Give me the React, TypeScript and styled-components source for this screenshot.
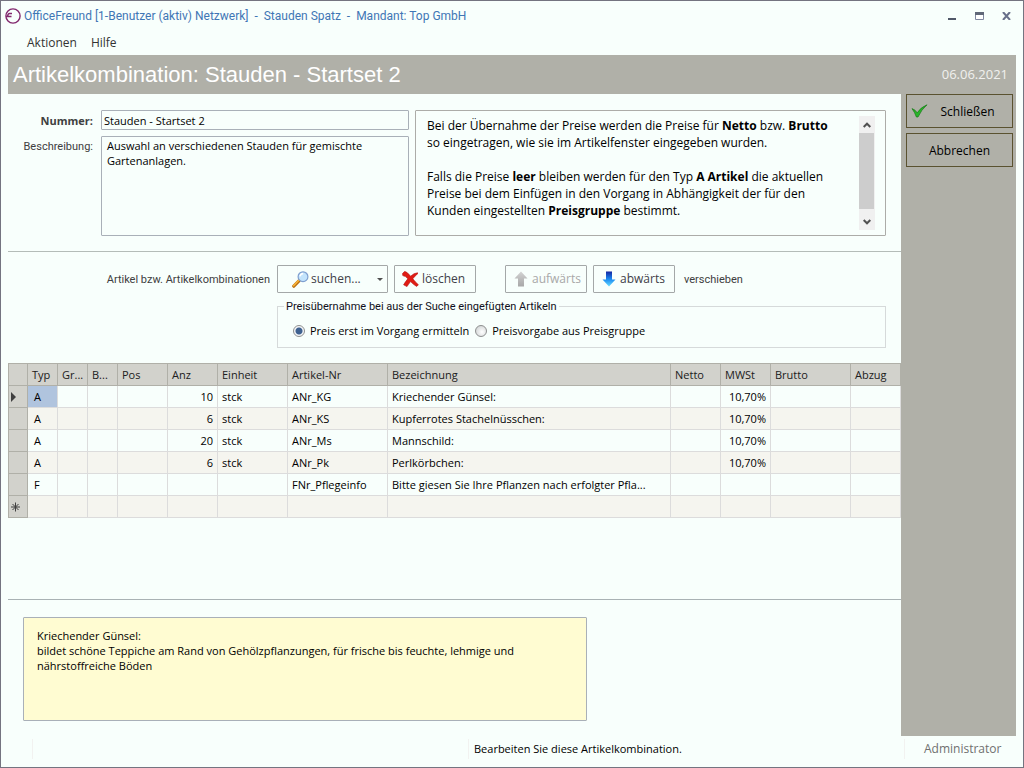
import React from "react";
import styled, { createGlobalStyle, css } from "styled-components";

const paper = "#f8fffc";
const stone = "#b0b0a8";
const line = "#a9b0b8";
const narrow = `Roboto, "Liberation Sans", sans-serif`;

const GlobalStyle = createGlobalStyle`
  * { box-sizing: border-box; }
  body {
    margin: 0;
    background: ${paper};
    color: #000;
    font: 11px/15px "Open Sans", "Noto Sans", sans-serif;
  }
  button, input, textarea { font: inherit; color: inherit; margin: 0; }
  svg { display: block; flex: none; }
`;

const Window = styled.div`
  display: flex;
  flex-direction: column;
  min-height: 100vh;
  padding: 0 7px;
  border: 1px solid #747480;
  background: ${paper};
`;

const TitleBar = styled.header`
  display: flex;
  align-items: center;
  height: 30px;
  margin: 0 -2px 0 -3px;
`;

const WindowTitle = styled.span`
  flex: 1;
  margin-left: 3px;
  color: #3f76b5;
  font: 12px/16px ${narrow};
  white-space: pre;
`;

const WindowButtons = styled.div`
  display: flex;
  gap: 3px;
`;

const WindowButton = styled.button`
  display: grid;
  place-items: center;
  width: 24px;
  height: 20px;
  padding: 0;
  border: 0;
  background: none;
`;

const MenuBar = styled.nav`
  display: flex;
  gap: 14px;
  height: 24px;
  padding-left: 19px;
`;

const MenuButton = styled.button`
  padding: 0 0 2px;
  border: 0;
  background: none;
  color: #333;
  font-size: 12px;
`;

const Banner = styled.div`
  display: flex;
  align-items: center;
  justify-content: space-between;
  height: 39px;
  padding: 0 8px 0 5px;
  background: ${stone};
  color: #fff;
`;

const PageTitle = styled.h1`
  margin: 0;
  font: 22px/26px "Liberation Sans", sans-serif;
`;

const BannerDate = styled.span`
  color: #f0f0ee;
  font-size: 13px;
`;

const Body = styled.div`
  display: flex;
  flex: 1;
`;

const Main = styled.main`
  display: flex;
  flex: 1;
  flex-direction: column;
  min-width: 0;
`;

const Sidebar = styled.aside`
  display: flex;
  flex-direction: column;
  gap: 5px;
  width: 115px;
  padding: 0 3px 0 5px;
  background: ${stone};
`;

const SideButton = styled.button`
  display: grid;
  grid-template-columns: 16px 1fr 16px;
  align-items: center;
  height: 34px;
  padding: 0 4px;
  border: 1px solid #5a5230;
  background: ${stone};
  font-size: 12px;

  span { grid-column: 2; }
  svg + span { grid-column: 2 / 4; }
`;

const MasterData = styled.section`
  display: grid;
  grid-template-columns: 87px minmax(0, 308fr) minmax(0, 471fr);
  grid-template-rows: 20px 100px;
  gap: 6px;
  padding: 16px 15px 15px 0;
  border-bottom: 1px solid #b4bcb8;
`;

const FieldLabel = styled.label<{ $strong?: boolean }>`
  padding: 3px 2px 0 0;
  color: #404040;
  text-align: right;
  ${(p) => (p.$strong ? "font-weight: 700;" : `font-family: ${narrow};`)}
`;

const box = css`
  border: 1px solid ${line};
  border-radius: 1px;
  background: ${paper};
`;

const TextInput = styled.input`
  ${box}
  width: 100%;
  height: 20px;
  padding: 0 2px;
`;

const TextBlock = styled.textarea`
  ${box}
  display: block;
  width: 100%;
  height: 100%;
  padding: 1px 5px;
  resize: none;
  outline: 0;
`;

const InfoBox = styled.div`
  ${box}
  display: flex;
  grid-area: 1 / 3 / 3 / 4;
  gap: 20px;
  padding: 5px 10px 5px 11px;
  border-color: #acaca8;
`;

const InfoText = styled.div`
  flex: 1;
  min-width: 0;
  font-size: 12px;
  line-height: 17px;

  p { margin: 1px 0 17px; }
`;

const ScrollTrack = styled.div`
  display: flex;
  flex-direction: column;
  width: 16px;
  background: #f0f0f0;
`;

const ScrollButton = styled.button`
  display: grid;
  place-items: center;
  height: 17px;
  padding: 0;
  border: 0;
  background: none;
`;

const ScrollThumb = styled.div`
  flex: 1;
  margin: 0 1px 4px 0;
  background: #cdcdcd;
`;

const ItemTools = styled.section`
  padding: 13px 15px 15px 0;
`;

const Toolbar = styled.div`
  display: flex;
  align-items: center;
  color: #404040;
  font-family: ${narrow};
`;

const ToolbarCaption = styled.span`
  width: 269px;
  padding-right: 7px;
  text-align: right;
`;

const ButtonPair = styled.div`
  display: flex;
  gap: 6px;
  margin-right: 9px;

  & + & { margin-left: 20px; }
`;

const ToolButton = styled.button<{ $wide?: boolean }>`
  display: flex;
  align-items: center;
  gap: ${(p) => (p.$wide ? 2 : 3)}px;
  width: ${(p) => (p.$wide ? 111 : 82)}px;
  height: 28px;
  padding: 0 ${(p) => (p.$wide ? "4px 0 14px" : "0 0 7px")};
  border: 1px solid #a4a8a8;
  border-radius: 1px;
  background: ${paper};
  color: #404048;
  font: 12px/16px "Open Sans", "Noto Sans", sans-serif;

  &:disabled { color: #a8a8a8; }
  svg + svg { margin-left: auto; }
`;

const PriceGroup = styled.fieldset`
  display: flex;
  align-items: center;
  gap: 6px;
  height: 49px;
  margin: 6px 0 0 269px;
  padding: 0 15px;
  border: 1px solid #d6dada;
`;

const GroupLegend = styled.legend`
  margin-left: -9px;
  padding: 0 2px;
  color: #101020;
  font-family: ${narrow};
`;

const RadioLabel = styled.label`
  display: flex;
  align-items: center;
  gap: 5px;
`;

const Radio = styled.input`
  appearance: none;
  width: 12px;
  height: 12px;
  border: 1px solid #8e8f8f;
  border-radius: 50%;
  background: radial-gradient(circle at 60% 60%, #fff, #c8cccc);

  &:checked {
    background: radial-gradient(circle, #3f618f 0 3px, #f4f6f8 4px);
  }
`;

const Grid = styled.table`
  width: 100%;
  table-layout: fixed;
  border-collapse: separate;
  border-spacing: 0;
`;

const cell = css`
  height: 22px;
  padding: 0 4px;
  overflow: hidden;
  text-overflow: ellipsis;
  white-space: nowrap;
`;

const HeadCell = styled.th`
  ${cell}
  height: 23px;
  padding-right: 1px;
  border: solid ${stone};
  border-width: 1px 1px 1px 0;
  background: #d2d2cc;
  color: #202020;
  font-weight: 400;
  text-align: left;

  &:first-child { border-left-width: 1px; }
`;

const RowHead = styled.th`
  ${cell}
  padding: 0 2px;
  border: solid ${stone};
  border-width: 0 1px 1px;
  background: #d2d2cc;
`;

const Cell = styled.td<{ $right?: boolean; $selected?: boolean }>`
  ${cell}
  border: solid #dcdcdc;
  border-width: 0 1px 1px 0;
  text-align: ${(p) => (p.$right ? "right" : "left")};
  background: ${(p) => (p.$selected ? "#b0c4de" : "transparent")};

  &:nth-child(2) { padding-left: 6px; }
`;

const Row = styled.tr`
  &:nth-child(even) { background: #f5f5ef; }
`;

const NoteSection = styled.section`
  margin-top: auto;
  padding: 17px 15px 15px;
  border-top: 1px solid #a9b2b4;
`;

const Note = styled.div`
  max-width: 564px;
  min-height: 104px;
  padding: 10px 13px;
  border: 1px solid ${line};
  border-radius: 1px;
  background: #fffcd2;
`;

const StatusBar = styled.footer`
  display: grid;
  grid-template-columns: 24px 436fr 436fr 112px;
  height: 31px;
  padding-top: 3px;
`;

const StatusCell = styled.span<{ $muted?: boolean }>`
  height: 20px;
  padding-left: ${(p) => (p.$muted ? 19 : 5)}px;
  border-left: 1px solid #f2f2f0;
  color: ${(p) => (p.$muted ? "#707070" : "#000")};
  font-size: ${(p) => (p.$muted ? 12 : 11)}px;
  line-height: 20px;
`;

const Logo = () => (
  <svg width="16" height="16" viewBox="0 0 16 16" fill="none" stroke="#82286e" strokeWidth="1.4">
    <circle cx="8" cy="8" r="7.1" />
    <path d="M1 8.500h5.500M7 5.500H4.500Q2.800 5.500 2.600 8.500" />
  </svg>
);

const Magnifier = () => (
  <svg width="17" height="17" viewBox="0 0 17 17">
    <path d="M1.8 15.2 7.2 9.6" stroke="#b86f12" strokeWidth="3.2" strokeLinecap="round" />
    <path d="M1.6 14.6 6.8 9.2" stroke="#f8b338" strokeWidth="1.6" strokeLinecap="round" />
    <circle cx="11" cy="5.7" r="4.9" fill="#c3e4fc" stroke="#7f9fd0" strokeWidth="1.2" />
    <path d="M8 5.4Q8.5 2.8 11.2 2.6" fill="none" stroke="#fff" strokeWidth="1.5" />
  </svg>
);

const DeleteMark = () => (
  <svg width="17" height="16" viewBox="0 0 17 16">
    <path d="M.5 2.600 2.600.4Q5 .6 8.600 5.200 12 2 15.400 1.800L16 2.400Q12.800 5 10.800 7.800q2.400 3.200 5.600 6L14.600 15.400Q11.400 13.600 8.600 10.600 6.400 13.200 5 15.600L1.600 13.800Q3.600 10.400 5.800 7.800 4 5.200.8 4.600z" fill="#e01c14" stroke="#b40c0c" strokeWidth=".6" />
  </svg>
);

const Arrow = ({ up }: { up?: boolean }) => (
  <svg width="16" height="16" viewBox="0 0 16 16">
    <defs>
      <linearGradient id={up ? "upFill" : "downFill"} x1="0" y1="0" x2="0" y2="1">
        <stop offset="0" stopColor={up ? "#d4d4d4" : "#1424a0"} />
        <stop offset=".5" stopColor={up ? "#bcbcbc" : "#1888f0"} />
        <stop offset="1" stopColor={up ? "#a8a8a8" : "#68dcff"} />
      </linearGradient>
    </defs>
    <path
      d={up ? "M8 .5 14.500 7.500H11v8H5v-8H1.500z" : "M8 15.500 14.500 8.500H11v-8H5v8H1.500z"}
      fill={up ? "url(#upFill)" : "url(#downFill)"}
    />
  </svg>
);

const CheckMark = () => (
  <svg width="17" height="14" viewBox="0 0 17 14">
    <path d="M1 4.600 4 6.200 6.200 8.800Q9.500 3.400 16 .8 10.500 5.400 7 13L5.400 13Q3.800 8.400 1 4.600z" fill="#28b428" stroke="#147814" strokeWidth=".7" />
  </svg>
);

const Chevron = ({ down }: { down?: boolean }) => (
  <svg width="8" height="6" viewBox="0 0 8 6" fill="none" stroke="#505050" strokeWidth="2">
    <path d={down ? "M.7 1 4 4.300 7.300 1" : "M.7 5 4 1.700 7.300 5"} />
  </svg>
);

const columns: [string, number][] = [
  ["", 20], ["Typ", 30], ["Gr...", 30], ["B...", 30], ["Pos", 50], ["Anz", 50],
  ["Einheit", 70], ["Artikel-Nr", 100], ["Bezeichnung", 0], ["Netto", 50],
  ["MWSt", 50], ["Brutto", 80], ["Abzug", 50],
];

const items = [
  ["A", "", "", "", "10", "stck", "ANr_KG", "Kriechender Günsel:", "", "10,70%", "", ""],
  ["A", "", "", "", "6", "stck", "ANr_KS", "Kupferrotes Stachelnüsschen:", "", "10,70%", "", ""],
  ["A", "", "", "", "20", "stck", "ANr_Ms", "Mannschild:", "", "10,70%", "", ""],
  ["A", "", "", "", "6", "stck", "ANr_Pk", "Perlkörbchen:", "", "10,70%", "", ""],
  ["F", "", "", "", "", "", "FNr_Pflegeinfo", "Bitte giesen Sie Ihre Pflanzen nach erfolgter Pfla...", "", "", "", ""],
  ["", "", "", "", "", "", "", "", "", "", "", ""],
];

export default function App() {
  return (
    <>
      <GlobalStyle />
      <Window>
        <TitleBar>
          <Logo />
          <WindowTitle>{"OfficeFreund [1-Benutzer (aktiv) Netzwerk]  -  Stauden Spatz  -  Mandant: Top GmbH"}</WindowTitle>
          <WindowButtons>
            <WindowButton aria-label="Minimieren">
              <svg width="8" height="8"><path d="M0 6h8v2H0z" fill="#505868" /></svg>
            </WindowButton>
            <WindowButton aria-label="Maximieren">
              <svg width="9" height="8"><path d="M.5.500h8v7h-8z" fill="#fff" stroke="#8088a0" /><path d="M0 0h9v3H0z" fill="#606878" /></svg>
            </WindowButton>
            <WindowButton aria-label="Fenster schließen">
              <svg width="9" height="8"><path d="M1 0 8 8M8 0 1 8" stroke="#68708a" strokeWidth="2" /></svg>
            </WindowButton>
          </WindowButtons>
        </TitleBar>
        <MenuBar>
          <MenuButton>Aktionen</MenuButton>
          <MenuButton>Hilfe</MenuButton>
        </MenuBar>
        <Banner>
          <PageTitle>Artikelkombination: Stauden - Startset 2</PageTitle>
          <BannerDate>06.06.2021</BannerDate>
        </Banner>
        <Body>
          <Main>
            <MasterData>
              <FieldLabel htmlFor="nummer" $strong>Nummer:</FieldLabel>
              <TextInput id="nummer" defaultValue="Stauden - Startset 2" />
              <FieldLabel htmlFor="beschreibung">Beschreibung:</FieldLabel>
              <TextBlock id="beschreibung" spellCheck={false} defaultValue={"Auswahl an verschiedenen Stauden für gemischte\nGartenanlagen."} />
              <InfoBox>
                <InfoText>
                  <p>
                    Bei der Übernahme der Preise werden die Preise für <b>Netto</b> bzw. <b>Brutto</b> so
                    eingetragen, wie sie im Artikelfenster eingegeben wurden.
                  </p>
                  <p>
                    Falls die Preise <b>leer</b> bleiben werden für den Typ <b>A Artikel</b> die aktuellen
                    Preise bei dem Einfügen in den Vorgang in Abhängigkeit der für den Kunden
                    eingestellten <b>Preisgruppe</b> bestimmt.
                  </p>
                </InfoText>
                <ScrollTrack>
                  <ScrollButton aria-label="Nach oben"><Chevron /></ScrollButton>
                  <ScrollThumb />
                  <ScrollButton aria-label="Nach unten"><Chevron down /></ScrollButton>
                </ScrollTrack>
              </InfoBox>
            </MasterData>
            <ItemTools>
              <Toolbar>
                <ToolbarCaption>Artikel bzw. Artikelkombinationen</ToolbarCaption>
                <ButtonPair>
                  <ToolButton $wide>
                    <Magnifier />
                    suchen...
                    <svg width="6" height="3"><path d="M0 0h6L3 3z" fill="#505050" /></svg>
                  </ToolButton>
                  <ToolButton><DeleteMark />löschen</ToolButton>
                </ButtonPair>
                <ButtonPair>
                  <ToolButton disabled><Arrow up />aufwärts</ToolButton>
                  <ToolButton><Arrow />abwärts</ToolButton>
                </ButtonPair>
                <span>verschieben</span>
              </Toolbar>
              <PriceGroup>
                <GroupLegend>Preisübernahme bei aus der Suche eingefügten Artikeln</GroupLegend>
                <RadioLabel>
                  <Radio type="radio" name="preis" defaultChecked />
                  Preis erst im Vorgang ermitteln
                </RadioLabel>
                <RadioLabel>
                  <Radio type="radio" name="preis" />
                  Preisvorgabe aus Preisgruppe
                </RadioLabel>
              </PriceGroup>
            </ItemTools>
            <Grid>
              <colgroup>
                {columns.map(([name, width]) => <col key={name} width={width || undefined} />)}
              </colgroup>
              <thead>
                <tr>{columns.map(([name]) => <HeadCell key={name}>{name}</HeadCell>)}</tr>
              </thead>
              <tbody>
                {items.map((item, r) => (
                  <Row key={r}>
                    <RowHead>
                      {r === 0 && <svg width="6" height="10"><path d="M0 0 5 5 0 10z" fill="#404040" /></svg>}
                      {r === 5 && (
                        <svg width="10" height="10" stroke="#404040">
                          <path d="M4.500.500v9M0 5h9M1.500 2l6 6M7.500 2l-6 6" />
                        </svg>
                      )}
                    </RowHead>
                    {item.map((text, c) => (
                      <Cell key={c} $right={c === 4 || c === 9} $selected={r === 0 && c === 0}>{text}</Cell>
                    ))}
                  </Row>
                ))}
              </tbody>
            </Grid>
            <NoteSection>
              <Note>
                Kriechender Günsel:<br />
                bildet schöne Teppiche am Rand von Gehölzpflanzungen, für frische bis feuchte, lehmige und
                nährstoffreiche Böden
              </Note>
            </NoteSection>
          </Main>
          <Sidebar>
            <SideButton><CheckMark /><span>Schließen</span></SideButton>
            <SideButton><span>Abbrechen</span></SideButton>
          </Sidebar>
        </Body>
        <StatusBar>
          <span />
          <StatusCell />
          <StatusCell>Bearbeiten Sie diese Artikelkombination.</StatusCell>
          <StatusCell $muted>Administrator</StatusCell>
        </StatusBar>
      </Window>
    </>
  );
}
